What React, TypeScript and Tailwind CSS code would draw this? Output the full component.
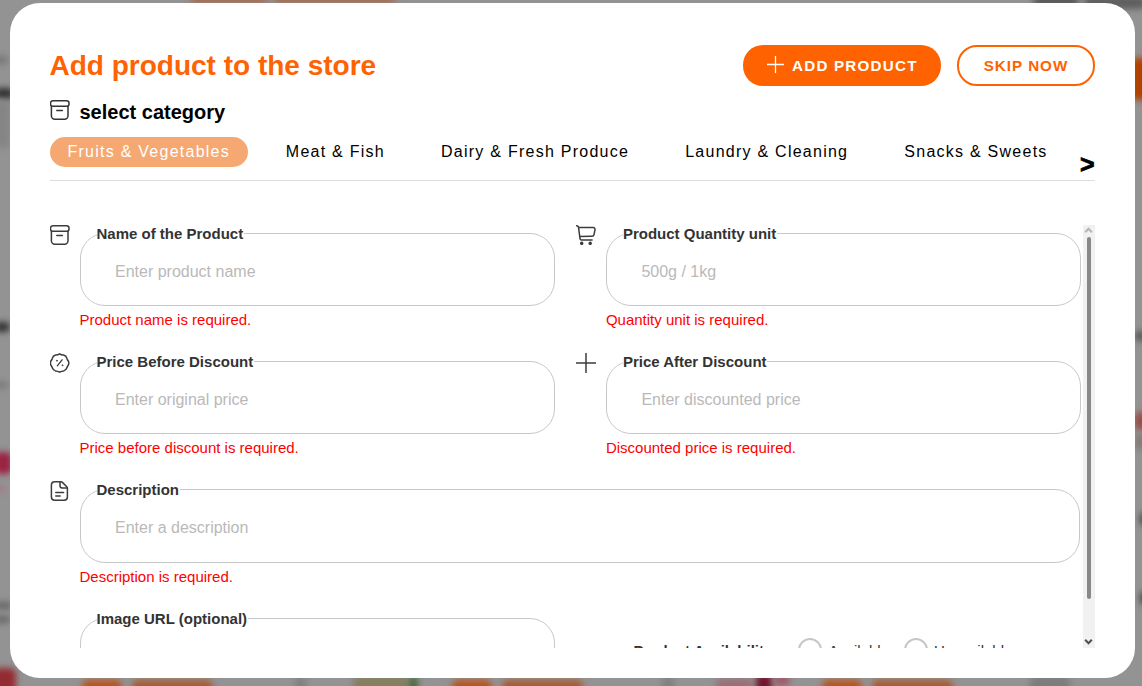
import React from "react";

type IconProps = { className?: string };

const strokeProps = {
  fill: "none",
  stroke: "currentColor",
  strokeWidth: 1.5,
  strokeLinecap: "round" as const,
  strokeLinejoin: "round" as const,
};

function ArchiveIcon({ className = "" }: IconProps) {
  return (
    <svg viewBox="0.4 0 20 20" className={`block size-5 shrink-0 ${className}`} {...strokeProps}>
      <rect x="0.9" y="0.75" width="18.5" height="5.6" rx="2.4" />
      <path d="M1.8 6.4v9.4a3.4 3.4 0 0 0 3.4 3.4h9.800a3.4 3.4 0 0 0 3.4-3.4V6.4" />
      <path d="M7.2 10.500h5.6" />
    </svg>
  );
}

function CartIcon() {
  return (
    <svg viewBox="0 0 20 20" className="block size-5 shrink-0" {...strokeProps}>
      <path d="M0.6 0.8l1.200.3q.6.2.7 1l1.500 11.500q.2 1.400 1.500 1.400h10.600" />
      <path d="M2.600 2.600h14.700a1.700 1.700 0 0 1 1.700 2l-.9 4.700a2.400 2.400 0 0 1-2.300 2L3.800 11.600" />
      <circle cx="5.7" cy="18.3" r="1" fill="currentColor" />
      <circle cx="14.2" cy="18.3" r="1" fill="currentColor" />
    </svg>
  );
}

function DiscountIcon() {
  return (
    <svg viewBox="0.4 0 20 20" className="block size-5 shrink-0" {...strokeProps}>
      <path d="M10 0.8Q11.6 2 14 2Q16.6 2.6 17.200 5.200Q17.6 6.700 18.900 8.200Q19.5 10 18.800 11.900Q17.5 13.400 17.200 15.100Q16.3 17.5 14 17.900Q11.8 18 10 19.200Q8.2 18 6 17.900Q3.7 17.5 2.800 15.100Q2.5 13.400 1.200 11.900Q0.5 10 1.100 8.200Q2.4 6.700 2.800 5.200Q3.4 2.6 6 2Q8.4 2 10 .8Z" />
      <path d="m7.700 12.800 4.800-6" strokeWidth="1.3" />
      <circle cx="7.3" cy="7.700" r=".5" fill="currentColor" strokeWidth=".7" />
      <circle cx="12.8" cy="12.3" r=".5" fill="currentColor" strokeWidth=".7" />
    </svg>
  );
}

function PlusIcon({ className = "" }: IconProps) {
  return (
    <svg viewBox="0 0 20 20" className={`block shrink-0 ${className}`} {...strokeProps} strokeLinecap="butt">
      <path d="M10 0v20M0 10h20" />
    </svg>
  );
}

function DocumentIcon() {
  return (
    <svg viewBox="0.4 0 20 20" className="block size-5 shrink-0" {...strokeProps}>
      <path d="M11.4.8H5A3.2 3.2 0 0 0 1.8 4v12A3.2 3.2 0 0 0 5 19.2h9.6a3.2 3.2 0 0 0 3.2-3.2V7.1a2 2 0 0 0-.6-1.4l-4.4-4.3a2 2 0 0 0-1.4-.6Z" />
      <path d="M10.4 1v3.8A2.2 2.2 0 0 0 12.600 7h5" />
      <path d="M6.200 11.600h7.800M6.200 14.900h4.400" />
    </svg>
  );
}

type FieldProps = {
  icon: React.ReactNode;
  label: string;
  placeholder: string;
  error?: string;
  wide?: boolean;
};

function Field({ icon, label, placeholder, error, wide = false }: FieldProps) {
  return (
    <div className={`flex items-start ${wide ? "col-span-2 h-[129px] w-[1030px]" : "h-[128px]"}`}>
      <div className="w-[30px] shrink-0 text-[#3c3c3c]">{icon}</div>
      <div className="min-w-0 flex-1">
        <fieldset
          className={`rounded-[25px] border border-[#c8c8c8] pl-[15.500px] ${wide ? "h-[82px]" : "h-[81px]"}`}
        >
          <legend className="h-[17px] pr-[0.500px] text-[15px] leading-[17px] font-bold whitespace-nowrap text-[#333]">
            {label}
          </legend>
          <input
            type="text"
            placeholder={placeholder}
            className="mt-[10px] block h-10 w-[400px] bg-transparent pl-[18.500px] text-base outline-none placeholder:text-[#b9b9b9]"
          />
        </fieldset>
        {error && <p className="mt-[5px] -ml-[0.500px] text-[15px] leading-[17px] text-[#f00]">{error}</p>}
      </div>
    </div>
  );
}

function RadioOption({ label }: { label: string }) {
  return (
    <label className="flex items-center gap-[6px]">
      <span className="size-6 rounded-full border-2 border-[#c6c6c6]" />
      <span className="text-[15px] leading-[17px] text-[#333]">{label}</span>
    </label>
  );
}

function Scrollbar() {
  return (
    <div className="flex w-3 shrink-0 flex-col items-center bg-[#f1f1f1]">
      <svg viewBox="0 0 12 12" className="block size-3" fill="none" stroke="#b5b5b5" strokeWidth="2">
        <path d="m2.200 7.300 3.300-3.500 3.300 3.500" />
      </svg>
      <div className="h-[362px] w-1 rounded-sm bg-[#888]" />
      <svg viewBox="0 0 12 12" className="mt-auto block size-3" fill="none" stroke="#505050" strokeWidth="2">
        <path d="m2.200 3.800 3.300 3.500 3.300-3.500" />
      </svg>
    </div>
  );
}

const blobs = [
  "left-[190px] top-[-12px] h-[15px] w-[78px] bg-[#a7684a]",
  "left-[274px] top-[-12px] h-[15px] w-[122px] bg-[#a7684a]",
  "left-[1033px] top-[-4px] h-[10px] w-[46px] bg-[#555]",
  "left-[1084px] top-[-4px] h-[13px] w-[62px] bg-[#5e5e5e]",
  "left-[1130px] top-[58px] h-[42px] w-[30px] bg-[#b04300]",
  "left-[1134px] top-[331px] h-[10px] w-[14px] bg-[#5c5c5c]",
  "left-[1134px] top-[412px] h-[18px] w-[14px] bg-[#955049]",
  "left-[1134px] top-[434px] h-[16px] w-[14px] bg-[#857d77]",
  "left-[1140px] top-[512px] h-[14px] w-[12px] bg-[#444]",
  "left-[1140px] top-[591px] h-[14px] w-[12px] bg-[#444]",
  "left-[-6px] top-[56px] h-[8px] w-[14px] bg-[#777]",
  "left-[-6px] top-[88px] h-[11px] w-[20px] bg-[#333]",
  "left-[-6px] top-[100px] h-[48px] w-[16px] bg-[#858585]",
  "left-[-6px] top-[322px] h-[10px] w-[16px] bg-[#333]",
  "left-[-6px] top-[382px] h-[6px] w-[14px] bg-[#777]",
  "left-[-6px] top-[452px] h-[22px] w-[18px] bg-[#9b2343]",
  "left-[-6px] top-[486px] h-[6px] w-[12px] bg-[#a57883]",
  "left-[-6px] top-[602px] h-[7px] w-[18px] bg-[#666]",
  "left-[-6px] top-[616px] h-[7px] w-[16px] bg-[#666]",
  "left-[-8px] top-[668px] h-[26px] w-[24px] bg-[#952b32]",
  "left-[82px] top-[680px] h-[20px] w-[40px] bg-[#b9541c]",
  "left-[132px] top-[680px] h-[20px] w-[81px] bg-[#a85b32]",
  "left-[295px] top-[676px] h-[20px] w-[11px] bg-[#808080]",
  "left-[353px] top-[676px] h-[20px] w-[56px] bg-[#857f60]",
  "left-[409px] top-[676px] h-[20px] w-[9px] bg-[#48683f]",
  "left-[452px] top-[680px] h-[20px] w-[40px] bg-[#b9541c]",
  "left-[502px] top-[680px] h-[20px] w-[81px] bg-[#a85b32]",
  "left-[662px] top-[676px] h-[20px] w-[12px] bg-[#808080]",
  "left-[716px] top-[678px] h-[20px] w-[36px] bg-[#987079]",
  "left-[756px] top-[674px] h-[20px] w-[16px] bg-[#71142f]",
  "left-[774px] top-[674px] h-[12px] w-[16px] bg-[#a05a69]",
  "left-[822px] top-[680px] h-[20px] w-[40px] bg-[#b9541c]",
  "left-[872px] top-[680px] h-[20px] w-[81px] bg-[#a85b32]",
  "left-[1030px] top-[676px] h-[20px] w-[40px] bg-[#7c7c7c]",
];

const categories = ["Meat & Fish", "Dairy & Fresh Produce", "Laundry & Cleaning", "Snacks & Sweets"];

export default function App() {
  return (
    <div className="relative isolate h-[686px] w-[1142px] overflow-hidden bg-[#939393] pt-[3px] pl-[10px] font-['Liberation_Sans',Arial,sans-serif]">
      <div className="absolute inset-0 -z-10" aria-hidden="true">
        {blobs.map((b) => (
          <div key={b} className={`absolute rounded-md blur-[3px] ${b}`} />
        ))}
      </div>

      <div className="h-[675px] w-[1125px] rounded-[30px] bg-white px-10 pt-[42px]">
        <header className="flex h-[41px] items-center justify-between">
          <h1 className="-ml-[0.500px] text-[28px] leading-8 font-bold text-[#ff6200]">Add product to the store</h1>
          <div className="flex gap-4">
            <button className="flex h-[41px] w-[198px] items-center rounded-[20px] bg-[#ff6200] pl-6 text-[15.200px] font-bold tracking-[1.220px] text-white">
              <PlusIcon className="mr-2 mb-[3px] size-[17px]" />
              <span className="pt-[2px]">ADD PRODUCT</span>
            </button>
            <button className="h-[41px] w-[138px] rounded-[20px] border-2 border-[#ff6200] pt-[2px] text-[15.200px] font-bold tracking-[1px] text-[#ff6200]">
              SKIP NOW
            </button>
          </div>
        </header>

        <div className="mt-[14px] flex h-5 gap-[9.500px]">
          <ArchiveIcon className="text-[#333]" />
          <h2 className="mt-[1px] text-[20px] leading-[23px] font-bold text-black">select category</h2>
        </div>

        <nav className="mt-[17px] flex h-[44px] items-start border-b border-[#ddd] text-base leading-[30px] tracking-[1.250px] whitespace-nowrap text-black">
          <button className="mr-[21px] h-[30px] w-[198px] rounded-[15px] bg-[#f6a873] pr-[0.500px] text-white">
            Fruits &amp; Vegetables
          </button>
          <div className="flex gap-[22.500px]">
            {categories.map((c) => (
              <button key={c} className="h-[30px] px-[16.800px]">
                {c}
              </button>
            ))}
          </div>
          <button className="mt-[11px] mr-[0.500px] ml-auto text-[25px] leading-8 font-bold tracking-normal [-webkit-text-stroke:0.700px_black]">
            &gt;
          </button>
        </nav>

        <div className="mt-[44px] flex h-[423px] justify-between overflow-hidden">
          <form className="grid w-[1031px] grid-cols-[505px_505px] content-start gap-x-[21.400px]">
            <Field icon={<ArchiveIcon />} label="Name of the Product" placeholder="Enter product name" error="Product name is required." />
            <Field icon={<CartIcon />} label="Product Quantity unit" placeholder="500g / 1kg" error="Quantity unit is required." />
            <Field icon={<DiscountIcon />} label="Price Before Discount" placeholder="Enter original price" error="Price before discount is required." />
            <Field icon={<PlusIcon className="size-5" />} label="Price After Discount" placeholder="Enter discounted price" error="Discounted price is required." />
            <Field wide icon={<DocumentIcon />} label="Description" placeholder="Enter a description" error="Description is required." />
            <Field icon={null} label="Image URL (optional)" placeholder="Enter image URL" />
            <div className="mt-[28px] flex h-6 items-center self-start pl-[57px]">
              <span className="w-[165px] text-[15px] leading-[17px] font-bold text-[#333]">Product Availability</span>
              <div className="flex gap-[15px]">
                <RadioOption label="Available" />
                <RadioOption label="Unavailable" />
              </div>
            </div>
          </form>
          <Scrollbar />
        </div>
      </div>
    </div>
  );
}
